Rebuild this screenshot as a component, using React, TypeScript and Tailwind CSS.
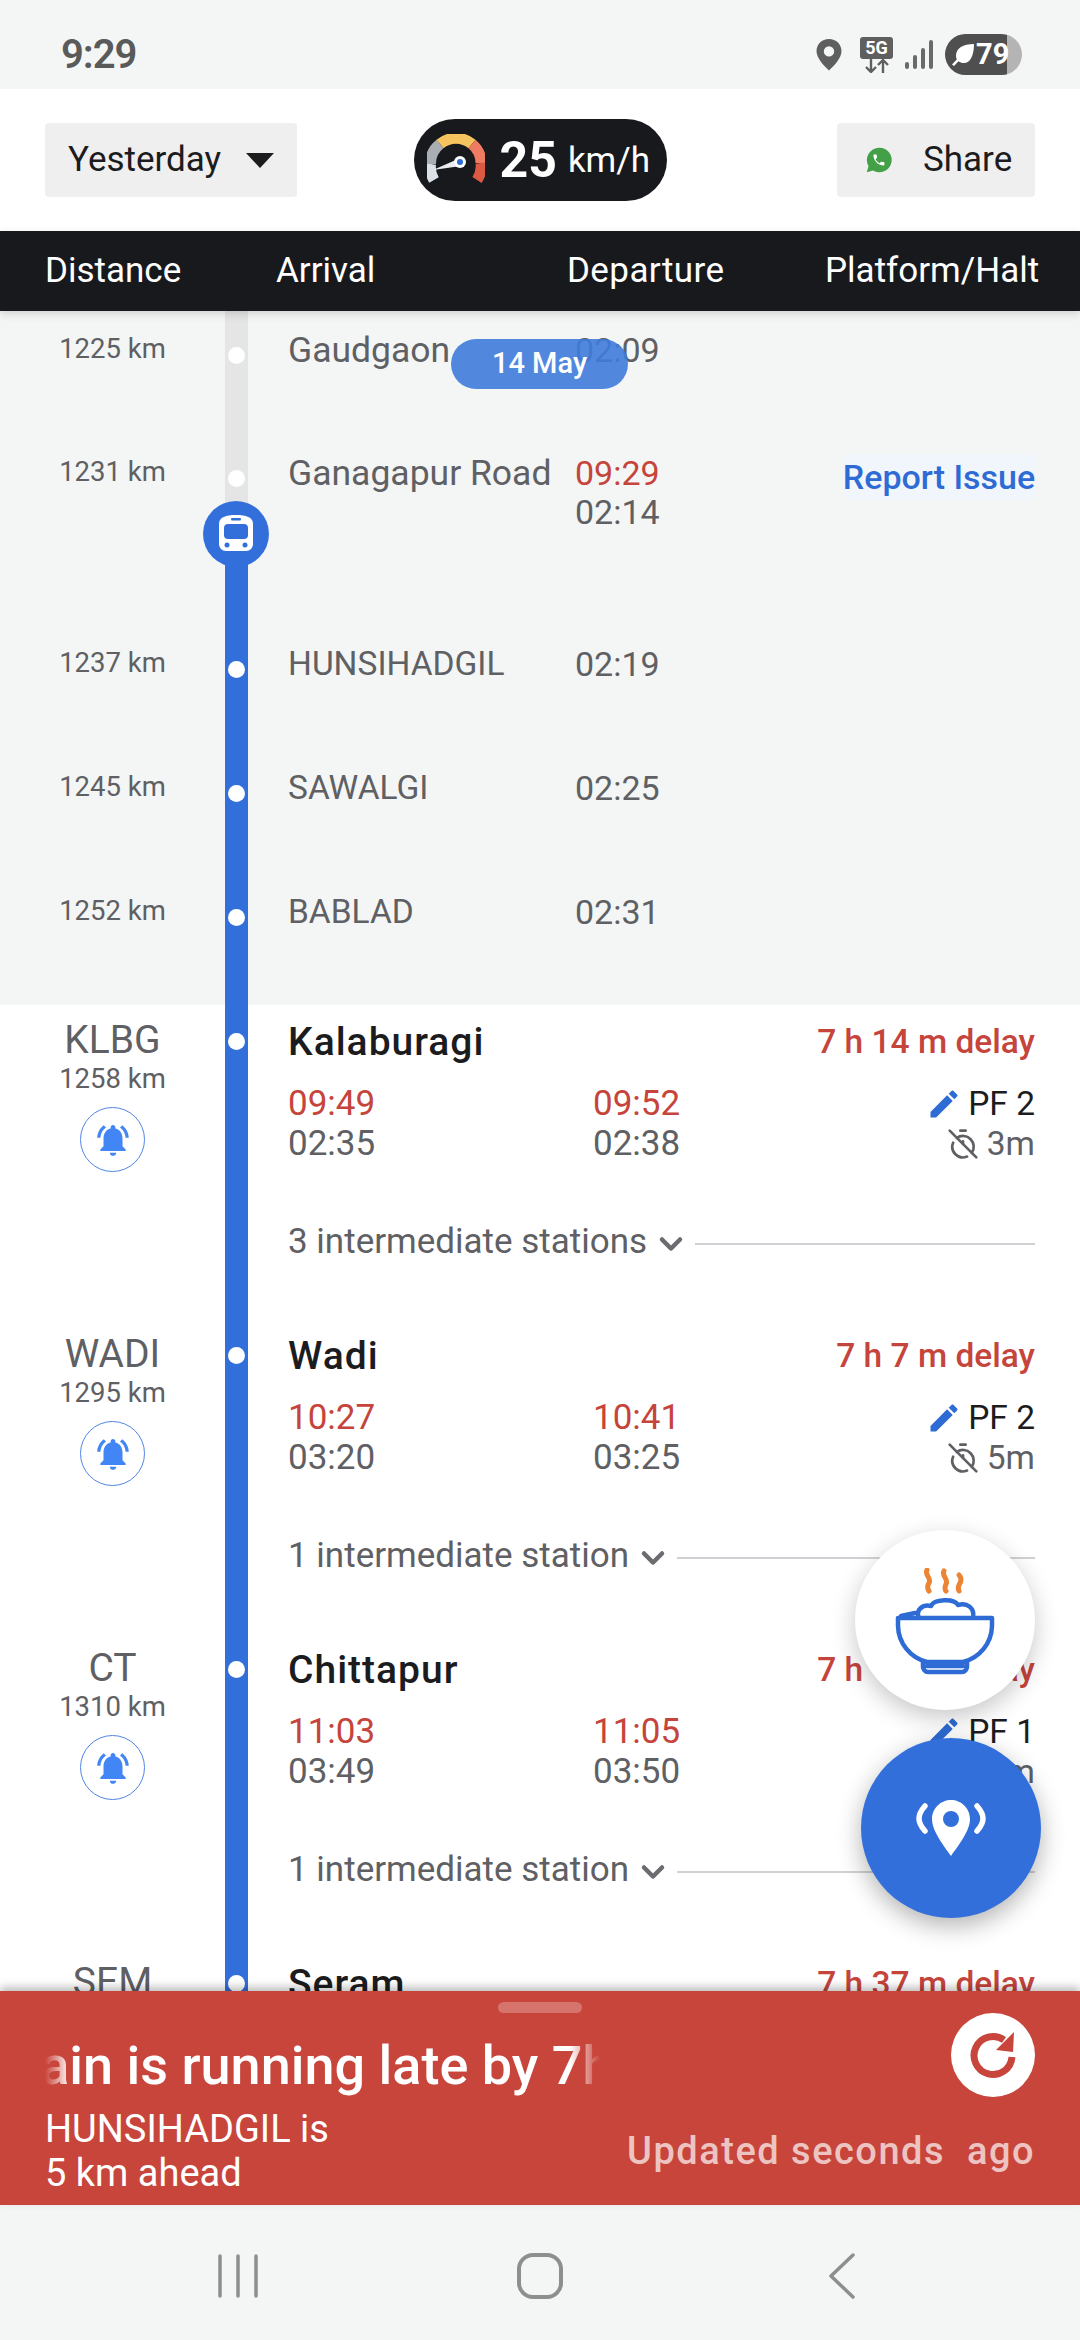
import { ChevronDown, TimerOff } from "lucide-react";

const BELL =
  "M7.58 4.08L6.15 2.65C3.75 4.48 2.17 7.3 2.03 10.5h2c.15-2.65 1.51-4.97 3.55-6.42zm12.39 6.42h2c-.15-3.2-1.73-6.02-4.12-7.85l-1.42 1.43c2.02 1.45 3.39 3.77 3.54 6.42zM18 11c0-3.07-1.64-5.64-4.5-6.32V4c0-.83-.67-1.5-1.5-1.5s-1.5.67-1.5 1.5v.68C7.63 5.36 6 7.92 6 11v5l-2 2v1h16v-1l-2-2v-5zm-6 11c.14 0 .27-.01.4-.04.65-.14 1.18-.58 1.44-1.18.1-.24.15-.5.15-.78h-4c.01 1.1.9 2 2.01 2z";
const PENCIL =
  "M3 17.25V21h3.75L17.81 9.94l-3.75-3.75L3 17.25zM20.71 7.04c.39-.39.39-1.02 0-1.41l-2.34-2.34c-.39-.39-1.02-.39-1.41 0l-1.83 1.83 3.75 3.75 1.83-1.83z";

const StatusBar = () => (
  <div className="flex h-[89px] shrink-0 items-center justify-between bg-[#f4f6f5] pl-[61px] pr-[58px] pt-[20px]">
    <span className="text-[40px] font-semibold tracking-[-1px] text-[#5a5a5a]">9:29</span>
    <div className="flex items-center gap-[12px]">
      <svg width="26" height="32" viewBox="0 0 26 32" className="mr-[6px]">
        <path
          fillRule="evenodd"
          fill="#5f5f5f"
          d="M13 0C5.8 0 .5 5.4.5 12.3.5 19 8 27 13 31.5 18 27 25.5 19 25.5 12.3 25.5 5.4 20.2 0 13 0Zm0 7.2a5.2 5.2 0 1 1 0 10.4 5.2 5.2 0 0 1 0-10.4Z"
        />
      </svg>
      <div className="flex w-[33px] flex-col items-center">
        <span className="flex h-[22px] w-[33px] items-center justify-center rounded-[3px] bg-[#5f5f5f] text-[18px] font-bold leading-none text-white">
          5G
        </span>
        <svg width="26" height="14" viewBox="0 0 26 14" fill="none" stroke="#5f5f5f" strokeWidth="2.4">
          <path d="M7 0v13M2 8l5 5 5-5M19 14V1M14 6l5-5 5 5" />
        </svg>
      </div>
      <svg width="28" height="30" viewBox="0 0 28 30" fill="#6a6a6a">
        <rect x="0" y="22" width="4" height="7" rx="2" />
        <rect x="8" y="15" width="4" height="14" rx="2" />
        <rect x="16" y="8" width="4" height="21" rx="2" />
        <rect x="24" y="0" width="4" height="29" rx="2" />
      </svg>
      <div className="flex h-[41px] w-[77px] items-center overflow-hidden rounded-full bg-[linear-gradient(90deg,#4f4f4f_0,#4f4f4f_80%,#b4b4b4_80%)] pl-[6px]">
        <svg width="24" height="24" viewBox="0 0 24 24" fill="white">
          <path d="M23 1C12 1 5 5 5 13c0 1.300.3 2.500.8 3.500L1 21.500 3 23l4.500-4.800C9 19.300 10.700 20 13 20c6 0 10-7 10-19Z" />
        </svg>
        <span className="ml-[1px] text-[29px] font-bold leading-none text-white">79</span>
      </div>
    </div>
  </div>
);

const SpeedGauge = () => (
  <svg width="58" height="52" viewBox="0 0 58 52" fill="none" strokeWidth="11">
    <path d="M7 46A25 25 0 0 1 3.500 30" stroke="#dbe1e8" />
    <path d="M3.500 30A25 25 0 0 1 13 10" stroke="#a9aeb5" />
    <path d="M13 10A25 25 0 0 1 45 10" stroke="#f5c45f" />
    <path d="M45 10A25 25 0 0 1 54 29" stroke="#ee7b62" />
    <path d="M54 29A25 25 0 0 1 50 46" stroke="#dd5a42" />
    <path d="M6 36 31 25l3 7Z" fill="#e8ecf0" stroke="none" />
    <circle cx="33" cy="28" r="6" fill="#fff" stroke="none" />
    <circle cx="33" cy="28" r="3" fill="#2f6bd4" stroke="none" />
  </svg>
);

const WhatsApp = () => (
  <svg width="28" height="28" viewBox="0 0 32 32">
    <path fill="#43a047" d="M16 2a14 14 0 0 0-12 21L2 30l7.300-2A14 14 0 1 0 16 2Z" />
    <path
      fill="#fff"
      transform="translate(7.500 7.500) scale(.7)"
      d="M6.620 10.790c1.440 2.830 3.760 5.140 6.590 6.590l2.200-2.200c.27-.27.67-.36 1.020-.24 1.120.37 2.330.57 3.570.57.55 0 1 .45 1 1V20c0 .55-.45 1-1 1-9.390 0-17-7.610-17-17 0-.55.45-1 1-1h3.500c.55 0 1 .45 1 1 0 1.250.2 2.450.57 3.570.11.35.03.74-.25 1.020l-2.200 2.200z"
    />
  </svg>
);

const Toolbar = () => (
  <div className="grid h-[142px] shrink-0 grid-cols-[1fr_253px_1fr] items-center bg-white px-[45px]">
    <div className="flex h-[74px] w-[252px] items-center justify-between rounded-[4px] bg-[#efefef] px-[23px] text-[35px] text-[#1c1c1e]">
      Yesterday
      <span className="h-0 w-0 border-x-[14px] border-t-[15px] border-x-transparent border-t-[#1c1c1e]" />
    </div>
    <div className="flex h-[82px] w-[253px] items-center gap-[15px] rounded-full bg-[#18191d] pl-[13px] text-white">
      <SpeedGauge />
      <div className="flex items-center gap-[11px]">
        <span className="text-[50px] font-bold leading-none">25</span>
        <span className="text-[35px] leading-none">km/h</span>
      </div>
    </div>
    <div className="flex h-[74px] w-[198px] items-center gap-[30px] justify-self-end rounded-[4px] bg-[#efefef] pl-[28px] text-[35px] text-[#1c1c1e]">
      <WhatsApp />
      Share
    </div>
  </div>
);

const HeaderRow = () => (
  <div className="z-10 grid h-[80px] shrink-0 grid-cols-[231px_291px_258px_1fr] items-center bg-[#18191d] px-[45px] text-[35px] text-white shadow-[0_3px_8px_rgba(0,0,0,0.15)]">
    <span>Distance</span>
    <span>Arrival</span>
    <span className="tracking-[0.4px]">Departure</span>
    <span className="whitespace-nowrap text-right">Platform/Halt</span>
  </div>
);

const Rail = ({ top, past }: { top: number; past?: boolean }) => (
  <div className={`flex flex-col items-center ${past ? "bg-[#e5e5e5]" : "bg-[#336fdb]"}`}>
    <span className="h-[17px] w-[17px] rounded-full bg-white" style={{ marginTop: top }} />
  </div>
);

type MinorProps = {
  km: string;
  name: string;
  time: string;
  h: string;
  nameSize?: string;
  past?: boolean;
};

const MinorStop = ({ km, name, time, h, nameSize = "text-[33.5px]", past }: MinorProps) => (
  <div className={`grid grid-cols-[225px_23px_1fr] ${h}`}>
    <div className="pt-[22px] text-center text-[27.5px] leading-[32px] text-[#5f6064]">{km}</div>
    <Rail top={36} past={past} />
    <div className="flex pl-[40px] pt-[20px] text-[34px] leading-[38px] text-[#5f6064]">
      <span className={`w-[287px] ${nameSize}`}>{name}</span>
      <span>{time}</span>
    </div>
  </div>
);

const CurrentStop = () => (
  <div className="relative grid h-[191px] grid-cols-[225px_23px_1fr]">
    <div className="pt-[22px] text-center text-[27.5px] leading-[32px] text-[#5f6064]">1231 km</div>
    <div className="flex flex-col items-center">
      <div className="flex h-[70px] w-full justify-center bg-[#e5e5e5]">
        <span className="mt-[36px] h-[17px] w-[17px] rounded-full bg-white" />
      </div>
      <div className="w-full flex-1 bg-[#336fdb]" />
    </div>
    <div className="flex pl-[40px] pt-[20px] text-[34px] leading-[38px] text-[#5f6064]">
      <span className="w-[287px] whitespace-nowrap text-[35.5px]">Ganagapur Road</span>
      <div className="flex flex-col gap-[1px]">
        <span className="text-[#c5443b]">09:29</span>
        <span>02:14</span>
      </div>
      <span className="ml-auto mr-[45px] flex h-[45px] w-[192px] items-center justify-center whitespace-nowrap rounded-[3px] bg-[#f1f6fd] text-[34px] font-medium text-[#2f6bd4]">
        Report Issue
      </span>
    </div>
    <div className="absolute left-[203px] top-[67px] flex h-[66px] w-[66px] items-center justify-center rounded-full bg-[#336fdb]">
      <svg width="36" height="38" viewBox="0 0 36 38">
        <path d="M18 0C8 0 1 2 1 9v20c0 4 3 7 7 7h20c4 0 7-3 7-7V9c0-7-7-9-17-9Z" fill="#fff" />
        <rect x="6" y="9" width="24" height="15" rx="4" fill="#336fdb" />
        <rect x="13" y="3" width="10" height="2.500" rx="1" fill="#336fdb" />
        <circle cx="9" cy="30" r="2.500" fill="#336fdb" />
        <circle cx="27" cy="30" r="2.500" fill="#336fdb" />
      </svg>
    </div>
  </div>
);

type StationProps = {
  code: string;
  km: string;
  name: string;
  delay: string;
  arr: string[];
  dep: string[];
  pf: string;
  halt: string;
  via: string;
};

const Station = ({ code, km, name, delay, arr, dep, pf, halt, via }: StationProps) => (
  <div className="grid h-[314px] shrink-0 grid-cols-[225px_23px_1fr] bg-white">
    <div className="flex flex-col items-center pt-[14px]">
      <span className="text-[39px] leading-[42px] text-[#5f6064]">{code}</span>
      <span className="text-[27.5px] leading-[36px] text-[#5f6064]">{km}</span>
      <span className="mt-[10px] flex h-[65px] w-[65px] items-center justify-center rounded-full border-[1.5px] border-[#4f86e6]">
        <svg width="38" height="38" viewBox="0 0 24 24" fill="#4285f4">
          <path d={BELL} />
        </svg>
      </span>
    </div>
    <Rail top={28} />
    <div className="flex flex-col pl-[40px] pr-[45px] pt-[14px]">
      <div className="flex items-center justify-between leading-[46px]">
        <span className="text-[39px] font-medium tracking-[1px] text-[#1c1c1e]">{name}</span>
        <span className="text-[33.5px] font-medium text-[#c5443b]">{delay}</span>
      </div>
      <div className="mt-[19px] grid grid-cols-[305px_1fr_auto] text-[35px] leading-[40px] text-[#5f6064]">
        <span className="text-[#c5443b]">{arr[0]}</span>
        <span className="text-[#c5443b]">{dep[0]}</span>
        <span className="flex items-center justify-end gap-[6px] text-[33.5px] text-[#1c1c1e]">
          <svg width="36" height="36" viewBox="0 0 24 24" fill="#2f6bd4">
            <path d={PENCIL} />
          </svg>
          {pf}
        </span>
        <span>{arr[1]}</span>
        <span>{dep[1]}</span>
        <span className="flex items-center justify-end gap-[8px] text-[33.5px]">
          <TimerOff size={32} strokeWidth={2} />
          {halt}
        </span>
      </div>
      <div className="mt-[58px] flex items-center text-[35px] leading-[40px] text-[#5f6064]">
        <span>{via}</span>
        <ChevronDown size={36} strokeWidth={3} className="ml-[6px] mt-[3px] text-[#6b6c70]" />
        <span className="ml-[6px] mt-[4px] h-[2px] flex-1 bg-[#cfd1d4]" />
      </div>
    </div>
  </div>
);

const StatusSheet = () => (
  <div className="z-10 h-[214px] shrink-0 bg-[#c8453c] text-white shadow-[0_-4px_8px_rgba(0,0,0,0.25)]">
    <div className="mx-auto mt-[11px] h-[11px] w-[84px] rounded-full bg-white/25" />
    <div className="grid grid-cols-[1fr_auto] px-[45px]">
      <div className="mt-[20px] h-[66px] w-[555px] overflow-hidden [mask-image:linear-gradient(90deg,transparent,black_25px,black_525px,transparent)]">
        <span className="ml-[-54px] block whitespace-nowrap text-[54px] font-medium leading-[66px]">
          Train is running late by 7h 14m
        </span>
      </div>
      <div className="flex h-[84px] w-[84px] items-center justify-center rounded-full bg-white">
        <svg width="50" height="50" viewBox="0 0 50 50" fill="none" stroke="#c8453c" strokeWidth="7">
          <path d="M36 10A19 19 0 1 0 44 27" />
          <path d="M46 2 45 22 28 20Z" fill="#c8453c" stroke="none" />
        </svg>
      </div>
    </div>
    <div className="flex items-center justify-between px-[45px] pt-[8px]">
      <div className="text-[38px] leading-[44px]">
        <div>HUNSIHADGIL is</div>
        <div>5 km ahead</div>
      </div>
      <span className="whitespace-pre text-[38px] font-medium tracking-[1.5px] text-white/70">Updated seconds  ago</span>
    </div>
  </div>
);

const NavBar = () => (
  <div className="flex h-[135px] shrink-0 items-center justify-center gap-[256px] bg-[#f4f6f5] pt-[7px]">
    <div className="flex w-[46px] justify-center">
      <svg width="40" height="44" viewBox="0 0 40 44" stroke="#8e8e8e" strokeWidth="3.500" strokeLinecap="round">
        <path d="M2 2v40M20 2v40M38 2v40" />
      </svg>
    </div>
    <svg width="46" height="46" viewBox="0 0 46 46" fill="none" stroke="#8e8e8e" strokeWidth="4">
      <rect x="2" y="2" width="42" height="42" rx="14" />
    </svg>
    <div className="flex w-[46px] justify-center">
      <svg width="28" height="46" viewBox="0 0 28 46" fill="none" stroke="#8e8e8e" strokeWidth="3.500" strokeLinecap="round" strokeLinejoin="round">
        <path d="M25 2 3 23l22 21" />
      </svg>
    </div>
  </div>
);

const Fabs = () => (
  <>
    <div className="absolute left-[855px] top-[1530px] z-20 flex h-[180px] w-[180px] items-center justify-center rounded-full bg-white pt-[4px] shadow-[0_8px_24px_rgba(0,0,0,0.22)]">
      <svg width="100" height="108" viewBox="0 0 100 108" fill="none" strokeWidth="4.500" strokeLinecap="round" strokeLinejoin="round">
        <g stroke="#ec8433" strokeWidth="5">
          <path d="M32 2c-3 5 5 8 2 13-2 3-2 5 0 8" />
          <path d="M49 3c-3 5 5 8 2 13-1 3-2 5 0 7" />
          <path d="M64 7c3 3 2 7 0 10-1 2-1 4 0 6" />
        </g>
        <path
          stroke="#2f6bd4"
          d="M24 50c-4-8 4-14 12-12 3-7 23-8 27-1 9-3 17 3 15 13M3 50h94v8A38 38 0 0 1 68 94H32A38 38 0 0 1 3 58ZM28 94v5c0 2 2 5 5 5h34c3 0 5-3 5-5v-5M32 98h36"
        />
        <path stroke="#2f6bd4" d="M6 48l14-3" />
      </svg>
    </div>
    <div className="absolute left-[861px] top-[1738px] z-20 flex h-[180px] w-[180px] items-center justify-center rounded-full bg-[#336fdb] shadow-[0_8px_24px_rgba(0,0,0,0.3)]">
      <svg width="70" height="56" viewBox="0 0 70 56" fill="none">
        <path
          fill="#fff"
          fillRule="evenodd"
          d="M35 0c-10 0-19 8-19 19 0 12 12 27 19 37 7-10 19-25 19-37C54 8 45 0 35 0Zm0 11a8 8 0 1 1 0 16 8 8 0 0 1 0-16Z"
        />
        <path d="M9 6C1 15 1 22 9 31M61 6c8 9 8 16 0 25" stroke="#fff" strokeWidth="5.500" strokeLinecap="round" />
      </svg>
    </div>
  </>
);

const App = () => {
  return (
    <div className="relative flex h-[2340px] w-[1080px] flex-col overflow-hidden bg-white font-['Roboto',sans-serif]">
      <StatusBar />
      <Toolbar />
      <HeaderRow />
      <div className="relative min-h-0 flex-1 overflow-hidden">
        <div className="bg-[#f4f6f5]">
          <MinorStop km="1225 km" name="Gaudgaon" nameSize="text-[35.5px]" time="02:09" h="h-[123px]" past />
          <CurrentStop />
          <MinorStop km="1237 km" name="HUNSIHADGIL" time="02:19" h="h-[124px]" />
          <MinorStop km="1245 km" name="SAWALGI" time="02:25" h="h-[124px]" />
          <MinorStop km="1252 km" name="BABLAD" time="02:31" h="h-[132px]" />
        </div>
        <Station code="KLBG" km="1258 km" name="Kalaburagi" delay="7 h 14 m delay" arr={["09:49", "02:35"]} dep={["09:52", "02:38"]} pf="PF 2" halt="3m" via="3 intermediate stations" />
        <Station code="WADI" km="1295 km" name="Wadi" delay="7 h 7 m delay" arr={["10:27", "03:20"]} dep={["10:41", "03:25"]} pf="PF 2" halt="5m" via="1 intermediate station" />
        <Station code="CT" km="1310 km" name="Chittapur" delay="7 h 10 m delay" arr={["11:03", "03:49"]} dep={["11:05", "03:50"]} pf="PF 1" halt="2m" via="1 intermediate station" />
        <Station code="SEM" km="1330 km" name="Seram" delay="7 h 37 m delay" arr={["11:30", "03:53"]} dep={["11:32", "03:55"]} pf="PF 1" halt="2m" via="1 intermediate station" />
        <div className="absolute left-[451px] top-[28px] flex h-[50px] w-[177px] items-center justify-center rounded-full bg-[#3f7cdc]/90 text-[29px] font-medium text-white">
          14 May
        </div>
      </div>
      <StatusSheet />
      <NavBar />
      <Fabs />
    </div>
  );
};

export default App;
